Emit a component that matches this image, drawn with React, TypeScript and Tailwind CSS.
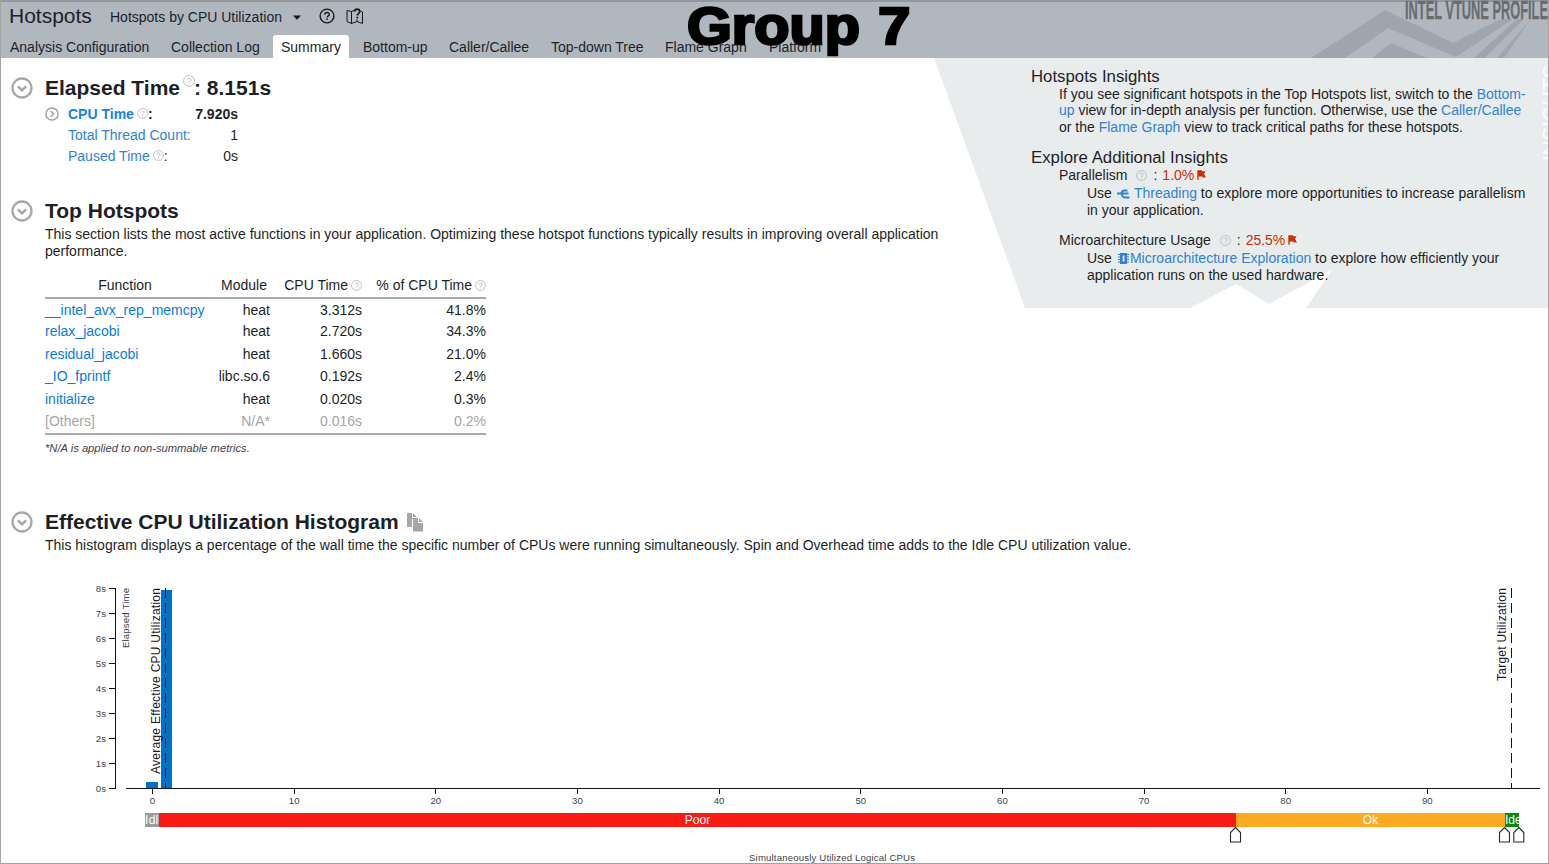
import React from "react";

function Help({ size = 11, className = "" }: { size?: number; className?: string }) {
  return (
    <svg width={size} height={size} viewBox="0 0 12 12" fill="none" stroke="#b4b6ba" className={"inline-block shrink-0 " + className}>
      <circle cx="6" cy="6" r="5.4" strokeWidth="0.9" />
      <path d="M4.2 4.9c0-2.4 3.6-2.3 3.6-.1 0 1.3-1.8 1.3-1.8 2.5M6 8.3v1" strokeWidth="0.9" />
    </svg>
  );
}

function Toggle() {
  return (
    <svg width="22" height="22" viewBox="0 0 22 22" fill="none" stroke="#a6a8aa" className="shrink-0">
      <circle cx="11" cy="11" r="9.5" strokeWidth="2.3" />
      <path d="M6.8 9.4l4.2 3.8 4.2-3.8" strokeWidth="2.6" />
    </svg>
  );
}

function Flag() {
  return (
    <svg width="9" height="10" viewBox="0 0 9 10" className="ml-[3px] shrink-0 mb-px">
      <path d="M0.3 0.3h1.400v9.400H.300zM1.500 0.300h3.500v1h3.500l-1.500 2.700 2 3.500h-3.500v-1H1.500z" fill="#cc2f00" />
    </svg>
  );
}

function Link({ children }: { children: React.ReactNode }) {
  return <span className="text-[#2f83d2]">{children}</span>;
}

const tabs = [
  { name: "Analysis Configuration", cls: "w-[159px] pl-[6px]" },
  { name: "Collection Log", cls: "w-[110px] pl-[8px]" },
  { name: "Summary", cls: "w-[76px] pl-[8px] bg-white rounded-t-[3px]" },
  { name: "Bottom-up", cls: "w-[92px] pl-[14px]" },
  { name: "Caller/Callee", cls: "w-[102px] pl-[8px]" },
  { name: "Top-down Tree", cls: "w-[114px] pl-[8px]" },
  { name: "Flame Graph", cls: "w-[104px] pl-[8px]" },
  { name: "Platform", cls: "w-[80px] pl-[8px]" },
];

const rows = [
  ["__intel_avx_rep_memcpy", "heat", "3.312s", "41.8%"],
  ["relax_jacobi", "heat", "2.720s", "34.3%"],
  ["residual_jacobi", "heat", "1.660s", "21.0%"],
  ["_IO_fprintf", "libc.so.6", "0.192s", "2.4%"],
  ["initialize", "heat", "0.020s", "0.3%"],
  ["[Others]", "N/A*", "0.016s", "0.2%"],
];

function Header() {
  return (
    <header className="relative h-[58px] shrink-0 bg-[#b0b7be] border-t-2 border-[#94979b] flex flex-col">
      <svg width="260" height="58" viewBox="1289 0 260 58" className="absolute right-0 -top-[2px]">
        <g fill="#9fa5ac">
          <path d="M1311 58L1385 10L1453 43L1501 19H1513L1456 57L1388 28L1345 58Z" />
          <path d="M1372 58L1391 43L1427 58Z" />
          <path d="M1474 58L1517 19H1524L1485 58Z" />
          <path d="M1497 58L1530 20L1504 58Z" />
        </g>
        <text x="1405" y="19" fontSize="26" fontWeight="700" fill="#686c70" stroke="#686c70" strokeWidth="0.3" textLength="143" lengthAdjust="spacingAndGlyphs">INTEL VTUNE PROFILE</text>
      </svg>
      <div className="flex h-[33px] items-center pl-[9px]">
        <h1 className="w-[101px] text-[21px] leading-[28px] -mt-[5px]">Hotspots</h1>
        <span className="w-[183px] text-[14px] -mt-[3px]">Hotspots by CPU Utilization</span>
        <svg width="8" height="5" viewBox="0 0 8 5" className="-mt-[3px]"><path d="M0 .5h8L4 4.8z" fill="#15171a" /></svg>
        <svg width="16" height="16" viewBox="0 0 16 16" fill="none" stroke="#15171a" className="ml-[18px] -mt-[5px]">
          <circle cx="8" cy="8" r="6.9" strokeWidth="1.4" />
          <path d="M5.8 6.6c0-2.9 4.5-2.8 4.5-.2 0 1.6-2.2 1.7-2.2 3.200M8.100 10.600v1.500" strokeWidth="1.4" />
        </svg>
        <svg width="18" height="17" viewBox="0 0 18 17" fill="none" stroke="#15171a" className="ml-[11px] -mt-[4px]">
          <path d="M5.500 3.500L1 2.500v11l4.500 2V3.500l2.500-1M5.500 15.500l5.500-2 5.500 2V4l-2-1M11 11.500v2" strokeWidth="1" />
          <path d="M8.700 3.600c0-3.200 5-3.200 5 0 0 2-2.400 2-2.400 4M11.300 8.800v1.700" strokeWidth="1.7" />
        </svg>
      </div>
      <nav className="flex h-[23px] pl-[4px] text-[14px] leading-[24px] whitespace-nowrap">
        {tabs.map((t) => <div key={t.name} className={t.cls}>{t.name}</div>)}
      </nav>
      <div className="absolute left-[687px] top-[-5px] origin-left scale-x-[1.13] text-[51px] leading-[60px] font-bold text-black [word-spacing:2px] whitespace-nowrap [-webkit-text-stroke:2.6px_black]">Group 7</div>
    </header>
  );
}

function Insights() {
  return (
    <aside className="relative w-[615px] h-[250px] shrink-0 -ml-[66px] pl-[97px] pt-[9px] text-[14px] leading-[17px] whitespace-nowrap">
      <svg width="615" height="250" viewBox="934 58 615 250" className="absolute left-0 top-0 -z-10">
        <path d="M934 58H1549V308H1306L1332 270L1269 304L1236 284L1190 308H1025Z" fill="#e9eced" />
        <text transform="translate(1557 161) rotate(-90)" fontSize="20" fill="#fff" textLength="96">INSIGHTS</text>
      </svg>
      <h3 className="text-[16.8px] leading-[19px]">Hotspots Insights</h3>
      <div className="pl-[28px] h-[62px]">
        <p>If you see significant hotspots in the Top Hotspots list, switch to the <Link>Bottom-</Link></p>
        <p className="-mt-px"><Link>up</Link> view for in-depth analysis per function. Otherwise, use the <Link>Caller/Callee</Link></p>
        <p>or the <Link>Flame Graph</Link> view to track critical paths for these hotspots.</p>
      </div>
      <h3 className="text-[16.8px] leading-[19px]">Explore Additional Insights</h3>
      <div className="pl-[28px]">
        <div className="flex items-center h-[17px]">Parallelism<Help className="ml-[9px]" /><span className="ml-[6px] mr-[5px]">:</span><span className="text-[#cc2f00]">1.0%</span><Flag /></div>
        <div className="pl-[28px] pt-px h-[48px]">
          <p className="flex items-center">Use
            <svg width="13" height="10" viewBox="0 0 13 10" fill="none" stroke="#2f83d2" strokeWidth="1.8" className="ml-[5px] mr-[4px]"><path d="M0 4.500h4.500c0-2 1.500-3 3-3h3M4 4.500h7.500M5 4.500c0 2.500 1.500 4 3 4h4.500" /></svg>
            <Link>Threading</Link>&nbsp;to explore more opportunities to increase parallelism</p>
          <p>in your application.</p>
        </div>
        <div className="flex items-center h-[17px]">Microarchitecture Usage<Help className="ml-[9px]" /><span className="ml-[6px] mr-[5px]">:</span><span className="text-[#cc2f00]">25.5%</span><Flag /></div>
        <div className="pl-[28px] pt-px">
          <p className="flex items-center">Use
            <svg width="11" height="11" viewBox="0 0 11 11" className="ml-[6px] mr-px"><path d="M2 0h7v11H2z" fill="#2f83d2" /><path d="M0 1.500h11M0 4h11M0 6.500h11M0 9h11" stroke="#2f83d2" /><path d="M4.700 2.500h1.800v6H4.700z" fill="#e9eced" /></svg>
            <Link>Microarchitecture Exploration</Link>&nbsp;to explore how efficiently your</p>
          <p>application runs on the used hardware.</p>
        </div>
      </div>
    </aside>
  );
}

function Chart() {
  const tickX = (n: number) => 152.5 + n * 14.165;
  return (
    <div className="relative h-[284px] shrink-0">
      <svg width="1549" height="284" viewBox="0 580 1549 284" className="absolute left-0 top-0">
        <rect x="146" y="782" width="12" height="6.5" fill="#0071c5" />
        <rect x="161" y="590" width="11" height="198.5" fill="#0071c5" />
        <g stroke="#111318" strokeWidth="1" fill="none" shapeRendering="crispEdges">
          <path d="M109 588.5H115.5V788.5H109M126 788.5H1540" />
          {[1, 2, 3, 4, 5, 6, 7].map((n) => <path key={n} d={`M109 ${788.5 - n * 25}H115`} />)}
          {[0, 10, 20, 30, 40, 50, 60, 70, 80, 90].map((n) => <path key={n} d={`M${tickX(n)} 788V794`} />)}
          <path d="M165.5 588V788M1511.5 588V788" strokeDasharray="10 5" />
        </g>
        <g fontSize="9.6" fill="#3d3f49">
          {[0, 1, 2, 3, 4, 5, 6, 7, 8].map((n) => <text key={n} x="106" y={792 - n * 25} textAnchor="end">{n}s</text>)}
          {[0, 10, 20, 30, 40, 50, 60, 70, 80, 90].map((n) => <text key={n} x={tickX(n)} y="804" textAnchor="middle">{n}</text>)}
          <text transform="translate(129 648) rotate(-90)" textLength="60">Elapsed Time</text>
          <text x="749" y="861" textLength="166">Simultaneously Utilized Logical CPUs</text>
        </g>
        <g fontSize="12" fill="#15171d">
          <text transform="translate(160 774) rotate(-90)" textLength="186">Average Effective CPU Utilization</text>
          <text transform="translate(1506 681) rotate(-90)" textLength="93">Target Utilization</text>
        </g>
        <g fill="#fff" stroke="#25272b" strokeWidth="1.1">
          {[1235.5, 1504.5, 1518.8].map((x) => <path key={x} d={`M${x} 827.5l5 5v9.500h-10v-9.500z`} />)}
        </g>
      </svg>
      <div className="relative flex pt-[233px] pl-[145px] text-[12px] leading-[14px] text-white text-center">
        <div className="w-[14px] h-[14px] overflow-hidden bg-[#999b9d] text-left tracking-[0.3px]">Idle</div>
        <div className="w-[1077px] bg-[#fa1b17]">Poor</div>
        <div className="w-[269px] bg-[#fcaa21]">Ok</div>
        <div className="w-[14px] h-[14px] overflow-hidden bg-[#078a0b] text-left">Ideal</div>
      </div>
    </div>
  );
}

export default function App() {
  return (
    <div className="relative isolate w-[1549px] h-[864px] overflow-hidden bg-white text-[#1d1f27] font-['Liberation_Sans',sans-serif] text-[14px] flex flex-col">
      <Header />
      <div className="flex h-[450px] shrink-0">
        <main className="w-[1000px] shrink-0 pl-[11px] pt-[16px]">
          <div className="flex items-center gap-3 h-[28px]">
            <Toggle />
            <h2 className="flex text-[21px] leading-[28px] font-bold whitespace-nowrap">Elapsed Time<Help size={12} className="ml-[3px] mt-[1px]" /><span className="-ml-px">: 8.151s</span></h2>
          </div>
          <dl className="pl-[34px] w-[227px] leading-[21px] text-[#2f83d2] whitespace-nowrap pt-[2px]">
            <div className="flex items-center h-[21px] font-bold">
              <svg width="14" height="14" viewBox="0 0 14 14" fill="none" stroke="#9fa1a5" strokeWidth="1.5" className="mr-[9px] -mt-[2px]"><circle cx="7" cy="7" r="6.1" /><path d="M5.500 4l3 3-3 3" /></svg>
              <dt className="text-[#1b7fe8]">CPU Time</dt><Help className="ml-[3px] mb-[3px]" /><span className="text-[#1d1f27]">:</span><dd className="ml-auto text-[#1d1f27]">7.920s</dd>
            </div>
            <div className="flex h-[21px] pl-[23px]"><dt>Total Thread Count:</dt><dd className="ml-auto text-[#1d1f27]">1</dd></div>
            <div className="flex items-center h-[21px] pl-[23px]"><dt>Paused Time</dt><Help className="ml-[3px] mb-[3px]" /><span className="text-[#1d1f27]">:</span><dd className="ml-auto text-[#1d1f27]">0s</dd></div>
          </dl>
          <div className="flex items-center gap-3 h-[28px] mt-[30px]">
            <Toggle /><h2 className="text-[21px] font-bold">Top Hotspots</h2>
          </div>
          <div className="pl-[34px]">
            <p className="leading-[17px] whitespace-nowrap pt-px">This section lists the most active functions in your application. Optimizing these hotspot functions typically results in improving overall application<br />performance.</p>
            <table className="mt-[13px] w-[441px] table-fixed border-collapse border-b-2 border-[#a8a9aa] text-right whitespace-nowrap">
              <colgroup><col className="w-[160px]" /><col className="w-[65px]" /><col className="w-[92px]" /><col className="w-[124px]" /></colgroup>
              <thead>
                <tr className="h-[25px] border-b-2 border-[#a8a9aa]">
                  <th className="p-0 pt-px font-normal text-center">Function</th>
                  <th className="p-0 pt-px font-normal pr-[3px]">Module</th>
                  <th className="p-0 pt-px font-normal">CPU Time<Help className="ml-[3px] mb-[2px]" /></th>
                  <th className="p-0 pt-px font-normal">% of CPU Time<Help className="ml-[3px] mb-[2px]" /></th>
                </tr>
              </thead>
              <tbody className="leading-[19px] align-top">
                {rows.map((r, i) => (
                  <tr key={r[0]} className={i === 5 ? "h-[24px] text-[#a4a5a8]" : "h-[22.4px]"}>
                    <td className={i === 5 ? "p-0 pt-[2px] text-left" : "p-0 pt-[2px] text-left text-[#087be0]"}>{r[0]}</td>
                    <td className="p-0 pt-[2px]">{r[1]}</td><td className="p-0 pt-[2px]">{r[2]}</td><td className="p-0 pt-[2px]">{r[3]}</td>
                  </tr>
                ))}
              </tbody>
            </table>
            <p className="mt-[4px] text-[11.2px] leading-[18px] italic text-[#41434c]">*N/A is applied to non-summable metrics.</p>
          </div>
        </main>
        <Insights />
      </div>
      <section className="h-[72px] shrink-0 pl-[11px]">
        <div className="flex items-center h-[28px]">
          <Toggle /><h2 className="ml-3 text-[21px] font-bold">Effective CPU Utilization Histogram</h2>
          <svg width="17" height="19" viewBox="0 0 17 19" className="ml-[8px]" fill="#a4a6a8"><path d="M0 0h5v5h4v1H5v8H0z" /><path d="M6 0l4 4H6zM6 5h5v5h5v8.500H6zM12 5l4 4h-4z" /></svg>
        </div>
        <p className="pl-[34px] leading-[18px]">This histogram displays a percentage of the wall time the specific number of CPUs were running simultaneously. Spin and Overhead time adds to the Idle CPU utilization value.</p>
      </section>
      <Chart />
      <div className="pointer-events-none absolute inset-0 border border-t-0 border-[#a1a3a5]" />
    </div>
  );
}
